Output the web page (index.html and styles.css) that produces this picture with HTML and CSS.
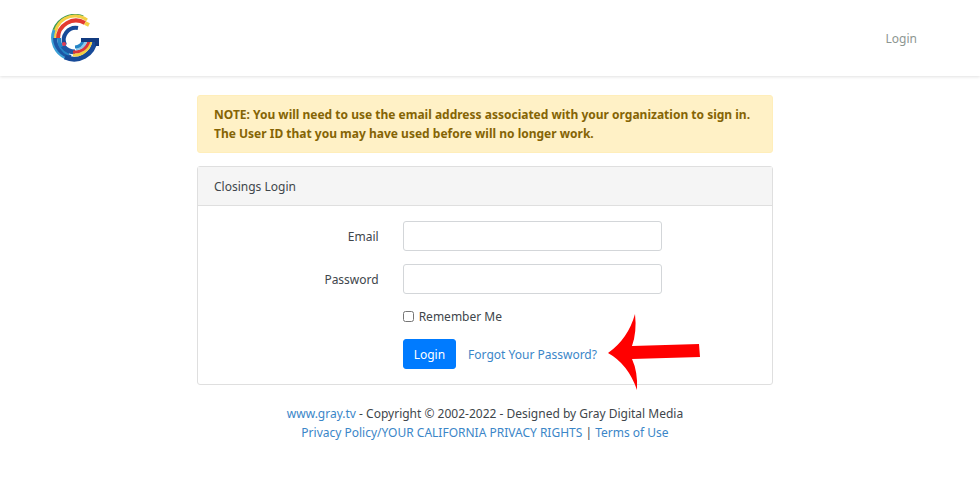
FILE: index.html
```html
<!DOCTYPE html>
<html lang="en">
<head>
    <meta charset="UTF-8">
    <meta name="viewport" content="width=device-width, initial-scale=1.0">
    <title>Closings Login</title>
    <link rel="stylesheet" href="styles.css">
</head>
<body>
    <nav class="navbar">
        <a class="navbar-brand" href="#" aria-label="Home">
            <svg width="48" height="48" viewBox="0 0 48 48" fill="none">
                <!-- top arcs -->
                <path d="M32 3A22 22 0 0 0 3 16" stroke="#3c9a55" stroke-width="3"/>
                <path d="M36 6A20 20 0 0 0 4 24" stroke="#f3cf45" stroke-width="3"/>
                <path d="M34 9A18 18 0 0 0 7 25" stroke="#e33a30" stroke-width="4"/>
                <path d="M34 9L38 11" stroke="#f3cf45" stroke-width="4"/>
                <!-- left and bottom arcs -->
                <path d="M3 16A22 22 0 0 0 15 44" stroke="#3a9fd6" stroke-width="3"/>
                <path d="M4 24A20 20 0 0 0 20 43" stroke="#1d56a5" stroke-width="4"/>
                <path d="M8 24A17 17 0 0 0 18 40" stroke="#2484c6" stroke-width="4"/>
                <path d="M12 32A15 15 0 0 0 24 38" stroke="#1d56a5" stroke-width="5"/>
                <path d="M14 43A21 21 0 0 0 44 26" stroke="#174a98" stroke-width="5"/>
                <path d="M22 41A17 17 0 0 0 40 27" stroke="#f3cf45" stroke-width="3"/>
                <path d="M22 38A15 15 0 0 0 38 27" stroke="#d9353b" stroke-width="3"/>
                <path d="M25 35A12 12 0 0 0 35 27" stroke="#8cc9e8" stroke-width="3"/>
                <path d="M24 33A9 9 0 0 0 32 27" stroke="#2484c6" stroke-width="3"/>
                <!-- inner ring and bar -->
                <path d="M27 14A12 12 0 0 0 14 31" stroke="#174a98" stroke-width="4"/>
                <path d="M30 26H46V32" stroke="#123b80" stroke-width="4"/>
                <circle cx="13" cy="30" r="2" fill="#dc3b55"/>
            </svg>
        </a>
        <a class="nav-link" href="#">Login</a>
    </nav>

    <div class="page">
        <main class="container">
            <div class="alert">
                NOTE: You will need to use the email address associated with your organization to sign in. The User ID that you may have used before will no longer work.
            </div>

            <div class="card">
                <div class="card-header">Closings Login</div>
                <form class="card-body">
                    <div class="form-row">
                        <label class="form-label" for="email">Email</label>
                        <input class="form-control" type="email" id="email">
                    </div>
                    <div class="form-row">
                        <label class="form-label" for="password">Password</label>
                        <input class="form-control" type="password" id="password">
                    </div>
                    <div class="form-row">
                        <div class="form-check">
                            <input type="checkbox" id="remember">
                            <label for="remember">Remember Me</label>
                        </div>
                    </div>
                    <div class="form-row">
                        <div class="form-actions">
                            <button class="btn" type="submit">Login</button>
                            <a class="forgot-link" href="#">Forgot Your Password?
                                <svg class="arrow" width="92" height="76" viewBox="0 0 92 76">
                                    <path d="M0 39Q20 25 27 0Q29 18 24 32L91 30L92 43L24 45Q30 58 29 76Q20 50 0 39Z" fill="#ff0000"/>
                                </svg>
                            </a>
                        </div>
                    </div>
                </form>
            </div>
        </main>

        <footer class="footer">
            <div><a href="#">www.gray.tv</a> - Copyright © 2002-2022 - Designed by Gray Digital Media</div>
            <div><a href="#">Privacy Policy/YOUR CALIFORNIA PRIVACY RIGHTS</a> | <a href="#">Terms of Use</a></div>
        </footer>
    </div>
</body>
</html>
```
FILE: styles.css
```css
* {
    box-sizing: border-box;
}
body {
    margin: 0;
    background-color: #fff;
    color: #40464b;
    font-family: "Noto Sans", sans-serif;
    font-size: 12px;
    line-height: 19px;
}
a {
    color: #3b86c8;
    text-decoration: none;
}
a:hover {
    text-decoration: underline;
}
.navbar {
    display: flex;
    justify-content: space-between;
    align-items: center;
    padding: 14px 51px;
    box-shadow: 0 1px 3px rgba(0, 0, 0, 0.12);
}
.navbar-brand svg {
    display: block;
}
.nav-link {
    padding: 6px 12px;
    color: #8d9691;
}
.page {
    padding: 19px 10px 19px 0;
}
.container {
    max-width: 576px;
    margin: 0 auto;
}
.alert {
    margin-bottom: 13px;
    padding: 9px 16px;
    border: 1px solid #ffeeba;
    border-radius: 3px;
    background-color: #fff1c6;
    color: #856404;
    font-weight: bold;
}
.card {
    border: 1px solid #dfdfdf;
    border-radius: 3px;
}
.card-header {
    padding: 10px 16px 9px;
    border-bottom: 1px solid #dfdfdf;
    background-color: #f5f5f5;
}
.card-body {
    display: flex;
    flex-direction: column;
    gap: 13px;
    padding: 15px 4px;
}
.form-row {
    display: grid;
    grid-template-columns: 4fr 6fr 2fr;
    align-items: center;
}
.form-label {
    padding-right: 12px;
    text-align: right;
}
.form-control {
    height: 30px;
    margin: 0 12px;
    padding: 4px 8px;
    border: 1px solid #d3d6d9;
    border-radius: 3px;
    min-width: 0;
    font: inherit;
}
.form-check, .form-actions {
    grid-column: 2 / 4;
    display: flex;
    align-items: center;
    margin-left: 12px;
}
.form-check {
    gap: 5px;
}
.form-check input {
    width: 11px;
    height: 11px;
    margin: 0;
}
.btn {
    height: 30px;
    padding: 0 10px;
    border: 1px solid #007bff;
    border-radius: 3px;
    background-color: #007bff;
    color: #fff;
    font: inherit;
    cursor: pointer;
}
.btn:hover {
    background-color: #0069d9;
}
.forgot-link {
    position: relative;
    margin-left: 12px;
}
/* arrow pointing at the reset link */
.arrow {
    position: absolute;
    top: -31px;
    left: 100%;
    margin-left: 11px;
}
.footer {
    margin-top: 19px;
    text-align: center;
}
```
